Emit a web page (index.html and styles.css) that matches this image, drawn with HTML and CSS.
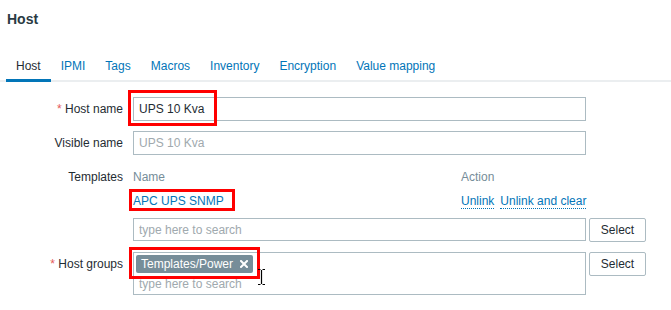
FILE: index.html
```
<!DOCTYPE html>
<html lang="en">
<head>
    <meta charset="UTF-8">
    <meta name="viewport" content="width=device-width, initial-scale=1.0">
    <title>Host</title>
    <link rel="stylesheet" href="styles.css">
</head>
<body>
    <div class="page">
        <h1 class="title">Host</h1>

        <ul class="tabs">
            <li class="tab active">Host</li>
            <li class="tab">IPMI</li>
            <li class="tab">Tags</li>
            <li class="tab">Macros</li>
            <li class="tab">Inventory</li>
            <li class="tab">Encryption</li>
            <li class="tab">Value mapping</li>
        </ul>

        <div class="form">
            <div class="row">
                <label class="label"><span class="req">*</span> Host name</label>
                <div class="field">
                    <input class="input" type="text" value="UPS 10 Kva">
                </div>
            </div>

            <div class="row">
                <label class="label">Visible name</label>
                <div class="field">
                    <input class="input" type="text" placeholder="UPS 10 Kva">
                </div>
            </div>

            <div class="row">
                <label class="label">Templates</label>
                <div class="field templates">
                    <div class="tpl-table">
                        <span class="th">Name</span>
                        <span class="th">Action</span>
                        <span><a class="link">APC UPS SNMP</a></span>
                        <span class="actions">
                            <a class="link dotted">Unlink</a>
                            <a class="link dotted">Unlink and clear</a>
                        </span>
                    </div>
                    <div class="with-btn">
                        <input class="input" type="text" placeholder="type here to search">
                        <button class="select-btn">Select</button>
                    </div>
                </div>
            </div>

            <div class="row">
                <label class="label"><span class="req">*</span> Host groups</label>
                <div class="field with-btn">
                    <div class="multiselect">
                        <span class="tag">Templates/Power
                            <svg class="tag-x" width="8" height="8" viewBox="0 0 8 8">
                                <path d="M1 1 L7 7 M7 1 L1 7" stroke="#fff" stroke-width="2" stroke-linecap="square"/>
                            </svg>
                        </span>
                        <span class="ms-placeholder">type here to search</span>
                    </div>
                    <button class="select-btn">Select</button>
                </div>
            </div>
        </div>

        <!-- annotation boxes -->
        <div class="mark mark-hostname"></div>
        <div class="mark mark-template"></div>
        <div class="mark mark-groups"></div>

        <svg class="ibeam" width="9" height="18" viewBox="0 0 9 18">
            <path d="M1 1.5 H3.5 M5.5 1.5 H8 M4.5 2 V16 M1 16.5 H3.5 M5.5 16.5 H8" stroke="#000" stroke-width="1.2" fill="none"/>
        </svg>
    </div>
</body>
</html>
```

FILE: styles.css
```
body {
    margin: 0;
    font-family: "Liberation Sans", Arial, sans-serif;
    font-size: 12px;
    color: #1f2c33;
    background-color: #fff;
}

.page {
    position: relative;
    padding: 11px 0 0 6px;
    width: 665px;
    height: 299px;
}

.title {
    margin: 0 0 0 1px;
    font-size: 14px;
    line-height: 16px;
    font-weight: bold;
    color: #2a3a43;
}

.tabs {
    display: flex;
    list-style: none;
    margin: 32px 0 0 -6px;
    padding: 0 0 0 6px;
    border-bottom: 2px solid #ebeef0;
}

.tab {
    padding: 0 10px 6px;
    line-height: 14px;
    color: #0275b8;
    margin-bottom: -2px;
    border-bottom: 3px solid transparent;
}

.tab.active {
    color: #1f2c33;
    border-bottom-color: #0275b8;
}

.form {
    display: flex;
    flex-direction: column;
    gap: 10px;
    padding-top: 15px;
}

.row {
    display: flex;
    align-items: flex-start;
}

.label {
    flex: none;
    width: 117px;
    margin-right: 10px;
    padding-top: 5px;
    line-height: 14px;
    text-align: right;
}

.req {
    color: #e45959;
}

.field {
    width: 453px;
}

.input {
    flex: none;
    box-sizing: border-box;
    display: block;
    width: 453px;
    height: 24px;
    margin: 0;
    padding: 0 5px;
    border: 1px solid #acbbc2;
    font-family: inherit;
    font-size: 12px;
    color: #1f2c33;
    outline: none;
}

.input::placeholder {
    color: #a0a9ae;
}

.templates {
    display: flex;
    flex-direction: column;
    gap: 9px;
    padding-top: 5px;
    width: auto;
}

.templates .input {
    height: 23px;
}

.tpl-table {
    display: grid;
    grid-template-columns: 328px 125px;
    row-gap: 10px;
    line-height: 14px;
    width: 453px;
}

.th {
    color: #768d99;
}

.link {
    color: #0275b8;
    cursor: pointer;
}

.actions {
    display: flex;
    gap: 6px;
    white-space: nowrap;
}

.dotted {
    border-bottom: 1px dotted #0275b8;
}

.with-btn {
    display: flex;
    align-items: flex-start;
    width: auto;
}

.select-btn {
    flex: none;
    box-sizing: border-box;
    width: 57px;
    height: 24px;
    margin-left: 3px;
    padding: 0;
    background-color: #fff;
    border: 1px solid #acbbc2;
    border-radius: 2px;
    font-family: inherit;
    font-size: 12px;
    color: #1f2c33;
    cursor: pointer;
}

.multiselect {
    flex: none;
    box-sizing: border-box;
    width: 453px;
    height: 43px;
    padding: 2px;
    border: 1px solid #acbbc2;
}

.tag {
    display: inline-flex;
    align-items: center;
    height: 18px;
    padding: 0 5px 0 5px;
    background-color: #768d99;
    border-radius: 2px;
    color: #fff;
    line-height: 18px;
}

.tag-x {
    margin-left: 7px;
}

.ms-placeholder {
    display: block;
    padding: 4px 0 0 3px;
    line-height: 14px;
    color: #a0a9ae;
}

.mark {
    position: absolute;
    box-sizing: border-box;
    border: 3px solid #f00;
}

.mark-hostname {
    left: 128px;
    top: 90px;
    width: 89px;
    height: 36px;
}

.mark-template {
    left: 129px;
    top: 189px;
    width: 106px;
    height: 22px;
}

.mark-groups {
    left: 129px;
    top: 247px;
    width: 131px;
    height: 32px;
}

.ibeam {
    position: absolute;
    left: 257px;
    top: 268px;
}
```
